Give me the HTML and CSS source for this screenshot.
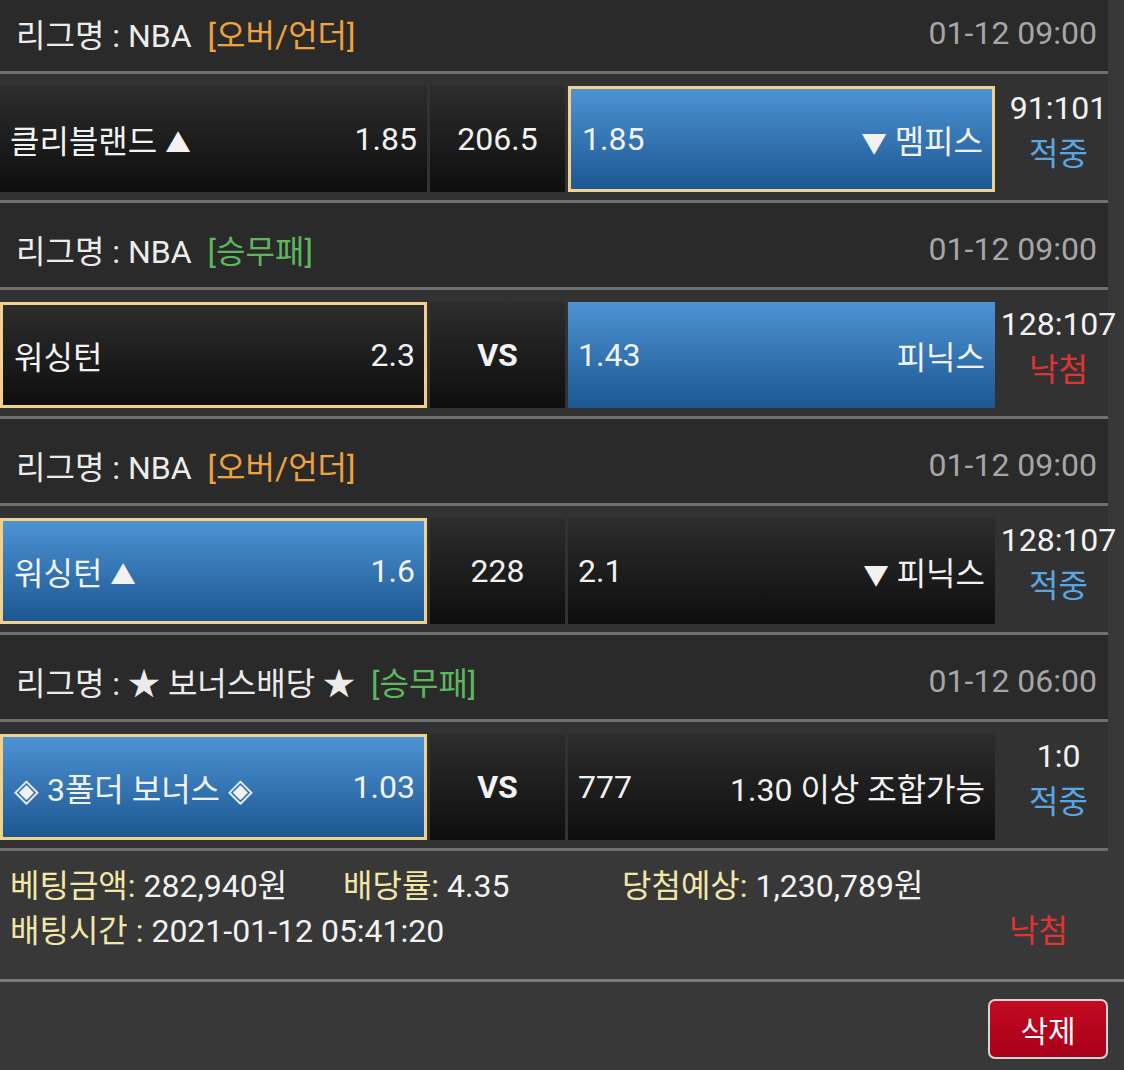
FILE: index.html
```
<!DOCTYPE html>
<html><head>
<meta charset="utf-8">
<title>배팅내역</title>
<meta name="viewport" content="width=device-width, initial-scale=1">
<link rel="stylesheet" href="styles.css">
</head><body>
<div class="slip">
  <div class="league"><span class="lname">리그명 : NBA</span><span class="type ou">[오버/언더]</span><span class="time">01-12 09:00</span></div>
  <div class="match">
    <div class="pick"><span>클리블랜드 <i class="tri">▲</i></span><span>1.85</span></div>
    <div class="mid">206.5</div>
    <div class="pick blue sel"><span>1.85</span><span><i class="tri">▼</i> 멤피스</span></div>
    <div class="result"><span>91:101</span><span class="hit">적중</span></div>
  </div>

  <div class="league"><span class="lname">리그명 : NBA</span><span class="type wdl">[승무패]</span><span class="time">01-12 09:00</span></div>
  <div class="match">
    <div class="pick sel"><span>워싱턴</span><span>2.3</span></div>
    <div class="mid vs">VS</div>
    <div class="pick blue"><span>1.43</span><span>피닉스</span></div>
    <div class="result"><span>128:107</span><span class="miss">낙첨</span></div>
  </div>

  <div class="league"><span class="lname">리그명 : NBA</span><span class="type ou">[오버/언더]</span><span class="time">01-12 09:00</span></div>
  <div class="match">
    <div class="pick blue sel"><span>워싱턴 <i class="tri">▲</i></span><span>1.6</span></div>
    <div class="mid">228</div>
    <div class="pick"><span>2.1</span><span><i class="tri">▼</i> 피닉스</span></div>
    <div class="result"><span>128:107</span><span class="hit">적중</span></div>
  </div>

  <div class="league"><span class="lname">리그명 : ★ 보너스배당 ★</span><span class="type wdl">[승무패]</span><span class="time">01-12 06:00</span></div>
  <div class="match">
    <div class="pick blue sel"><span>◈ 3폴더 보너스 ◈</span><span>1.03</span></div>
    <div class="mid vs">VS</div>
    <div class="pick"><span>777</span><span>1.30 이상 조합가능</span></div>
    <div class="result"><span>1:0</span><span class="hit">적중</span></div>
  </div>
</div>

<div class="summary">
  <div class="sum-row">
    <span><b>베팅금액:</b> 282,940원</span>
    <span><b>배당률:</b> 4.35</span>
    <span><b>당첨예상:</b> 1,230,789원</span>
  </div>
  <div class="sum-row2">
    <span><b>배팅시간 :</b> 2021-01-12 05:41:20</span>
    <span class="miss">낙첨</span>
  </div>
</div>

<div class="actions">
  <button type="button" class="del-btn">삭제</button>
</div>
</body></html>
```

FILE: styles.css
```
body { margin: 0; background: #383838; color: #f2f2f2; font-family: Roboto, "Noto Sans CJK KR", sans-serif; font-size: 32px; overflow: hidden; }
.slip { width: 1108px; margin-top: -13px; background: #323232; }
.league { display: flex; align-items: center; height: 87px; box-sizing: border-box; padding: 8px 11px 0 16px; background: #2a2a2a; border-bottom: 3px solid #707070; }
.lname { color: #ececec; }
.type { margin-left: 16px; }
.ou { color: #f0a23c; }
.wdl { color: #5cb85c; }
.time { margin-left: auto; color: #a6a6a6; }
.match { display: grid; grid-template-columns: 427px 135px 427px 1fr; column-gap: 3px; height: 129px; padding-top: 12px; box-sizing: border-box; border-bottom: 3px solid #707070; }
.pick, .mid { height: 106px; box-sizing: border-box; background: linear-gradient(#2d2d2d, #0e0e0e); display: flex; align-items: center; }
.pick { justify-content: space-between; padding: 0 10px; }
.mid { justify-content: center; }
.vs { font-weight: bold; }
.tri { font-style: normal; font-size: 0.8em; }
.blue { background: linear-gradient(#4d93d4, #1c5791); }
.sel { border: 3px solid #f2d28a; padding: 0 9px 0 11px; }
.result { display: flex; flex-direction: column; align-items: center; justify-content: center; margin-right: -11px; height: 106px; line-height: 46px; padding-bottom: 16px; box-sizing: border-box; }
.hit { color: #5aa6e2; }
.miss { color: #e23333; }
.summary { padding: 13px 0 25px 10px; border-bottom: 3px solid #7a7a7a; line-height: 45px; }
.summary b { font-weight: normal; color: #f1e7a6; }
.sum-row { display: grid; grid-template-columns: 333px 279px 1fr; }
.sum-row2 { display: flex; justify-content: space-between; padding-right: 56px; }
.actions { display: flex; justify-content: flex-end; padding: 17px 16px 0 0; }
.del-btn { width: 120px; height: 60px; background: linear-gradient(#c30a22, #a8001a); color: white; border: 2px solid #d6d6d6; border-radius: 7px; font-family: inherit; font-size: 30px; padding: 0; }
```
